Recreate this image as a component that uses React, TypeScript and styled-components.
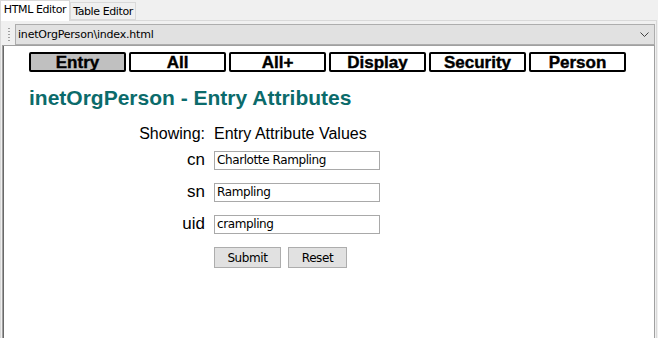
import React from "react";
import styled, { createGlobalStyle } from "styled-components";

const GlobalStyle = createGlobalStyle`
  html, body {
    margin: 0;
    padding: 0;
    background: #f0f0f0;
  }
  * {
    box-sizing: border-box;
  }
`;

const Window = styled.div`
  width: 658px;
  height: 338px;
  display: flex;
  flex-direction: column;
  background: #f0f0f0;
  font-family: "Liberation Sans", Arial, sans-serif;
  overflow: hidden;
`;

const TabStrip = styled.div`
  display: flex;
  align-items: flex-end;
  height: 20px;
`;

const Tab = styled.div<{ $active?: boolean }>`
  font-family: "DejaVu Sans", Tahoma, sans-serif;
  font-size: 11px;
  white-space: nowrap;
  color: #000;
  display: flex;
  align-items: center;
  justify-content: center;
  flex: none;
  height: ${(p) => (p.$active ? "21px" : "18px")};
  width: ${(p) => (p.$active ? "70px" : "66px")};
  background: ${(p) => (p.$active ? "#ffffff" : "#f0f0f0")};
  border: 1px solid #d9d9d9;
  border-bottom: ${(p) => (p.$active ? "none" : "1px solid #d9d9d9")};
  margin-bottom: ${(p) => (p.$active ? "-1px" : "0")};
  position: relative;
  z-index: ${(p) => (p.$active ? 1 : 0)};
  letter-spacing: -0.4px;
  padding-bottom: ${(p) => (p.$active ? "3px" : "0")};
`;

const TabPage = styled.div`
  flex: 1;
  display: flex;
  flex-direction: column;
  border: 1px solid #d9d9d9;
  border-bottom: none;
  margin-right: 1px;
  padding: 3px 1px 0 1px;
  min-height: 0;
`;

const AddressRow = styled.div`
  display: flex;
  align-items: stretch;
  height: 21px;
`;

const Grip = styled.div`
  width: 13px;
  display: flex;
  justify-content: center;
  padding-top: 3px;
  & span {
    width: 2px;
    height: 14px;
    background-image: radial-gradient(circle, #a0a0a0 0.9px, transparent 1px);
    background-size: 2px 3px;
  }
`;

const AddressBox = styled.div`
  flex: 1;
  display: flex;
  align-items: center;
  justify-content: space-between;
  background: #e1e1e1;
  border: 1px solid #adadad;
  padding: 0 5px 0 2px;
  font-family: "DejaVu Sans", Tahoma, sans-serif;
  font-size: 11px;
  letter-spacing: -0.2px;
  color: #000;
`;

const Content = styled.div`
  flex: 1;
  background: #ffffff;
  border-left: 1px solid #a0a0a0;
  box-shadow: inset 1px 0 0 #696969;
  border-right: 1px solid #a0a0a0;
  border-top: 1px solid #a0a0a0;
  padding: 6px 0 0 26px;
  display: flex;
  flex-direction: column;
`;

const NavBar = styled.div`
  display: flex;
  gap: 3px;
`;

const NavButton = styled.div<{ $selected?: boolean }>`
  width: 97px;
  height: 20px;
  border: 2px solid #000;
  border-radius: 2px;
  background: ${(p) => (p.$selected ? "#c0c0c0" : "#ffffff")};
  display: flex;
  align-items: center;
  justify-content: center;
  font-family: "Liberation Sans", Arial, sans-serif;
  font-weight: 700;
  font-size: 17px;
  line-height: 16px;
  color: #000;
  overflow: hidden;
  padding-top: 1px;
  -webkit-text-stroke: 0.4px #000;
`;

const Heading = styled.h1`
  margin: 14px 0 0 0;
  font-family: "Liberation Sans", Arial, sans-serif;
  font-size: 21px;
  font-weight: 700;
  color: #0b6b6b;
  line-height: 24px;
`;

const FormGrid = styled.div`
  display: grid;
  grid-template-columns: 176px 170px;
  column-gap: 9px;
  align-items: center;
  margin-top: 14px;
`;

const Label = styled.div<{ $big?: boolean }>`
  text-align: right;
  font-family: "Liberation Sans", Arial, sans-serif;
  font-size: ${(p) => (p.$big ? "17px" : "16px")};
  color: #000;
  line-height: ${(p) => (p.$big ? "32px" : "20px")};
`;

const Value = styled.div`
  font-family: "Liberation Sans", Arial, sans-serif;
  font-size: 16px;
  color: #000;
  line-height: 20px;
`;

const TextInput = styled.input`
  width: 166px;
  height: 19px;
  border: 1px solid #a9a9a9;
  padding: 0 2px;
  font-family: "DejaVu Sans", Tahoma, sans-serif;
  font-size: 12px;
  letter-spacing: -0.4px;
  color: #000;
  outline: none;
  background: #fff;
`;

const ButtonRow = styled.div`
  display: flex;
  gap: 7px;
  padding-top: 7px;
`;

const FormButton = styled.button<{ $w: number }>`
  width: ${(p) => p.$w}px;
  height: 21px;
  background: #e1e1e1;
  border: 1px solid #adadad;
  border-radius: 0;
  font-family: "DejaVu Sans", Tahoma, sans-serif;
  font-size: 12px;
  letter-spacing: -0.4px;
  color: #000;
  padding: 0;
`;

const Chevron = () => (
  <svg width="9" height="6" viewBox="0 0 9 6">
    <path d="M0.5 0.5 L4.5 4.5 L8.5 0.5" stroke="#404040" strokeWidth="1" fill="none" />
  </svg>
);

const navItems = ["Entry", "All", "All+", "Display", "Security", "Person"];

const fields = [
  { name: "cn", value: "Charlotte Rampling" },
  { name: "sn", value: "Rampling" },
  { name: "uid", value: "crampling" },
];

export default function App() {
  return (
    <>
      <GlobalStyle />
      <Window>
        <TabStrip>
          <Tab $active>HTML Editor</Tab>
          <Tab>Table Editor</Tab>
        </TabStrip>
        <TabPage>
          <AddressRow>
            <Grip>
              <span />
            </Grip>
            <AddressBox>
              <span>inetOrgPerson\index.html</span>
              <Chevron />
            </AddressBox>
          </AddressRow>
          <Content>
            <NavBar>
              {navItems.map((item, i) => (
                <NavButton key={item} $selected={i === 0}>
                  {item}
                </NavButton>
              ))}
            </NavBar>
            <Heading>inetOrgPerson - Entry Attributes</Heading>
            <FormGrid>
              <Label>Showing:</Label>
              <Value>Entry Attribute Values</Value>
              {fields.map((f) => (
                <React.Fragment key={f.name}>
                  <Label $big>{f.name}</Label>
                  <div>
                    <TextInput defaultValue={f.value} />
                  </div>
                </React.Fragment>
              ))}
              <div />
              <ButtonRow>
                <FormButton $w={67}>Submit</FormButton>
                <FormButton $w={59}>Reset</FormButton>
              </ButtonRow>
            </FormGrid>
          </Content>
        </TabPage>
      </Window>
    </>
  );
}
